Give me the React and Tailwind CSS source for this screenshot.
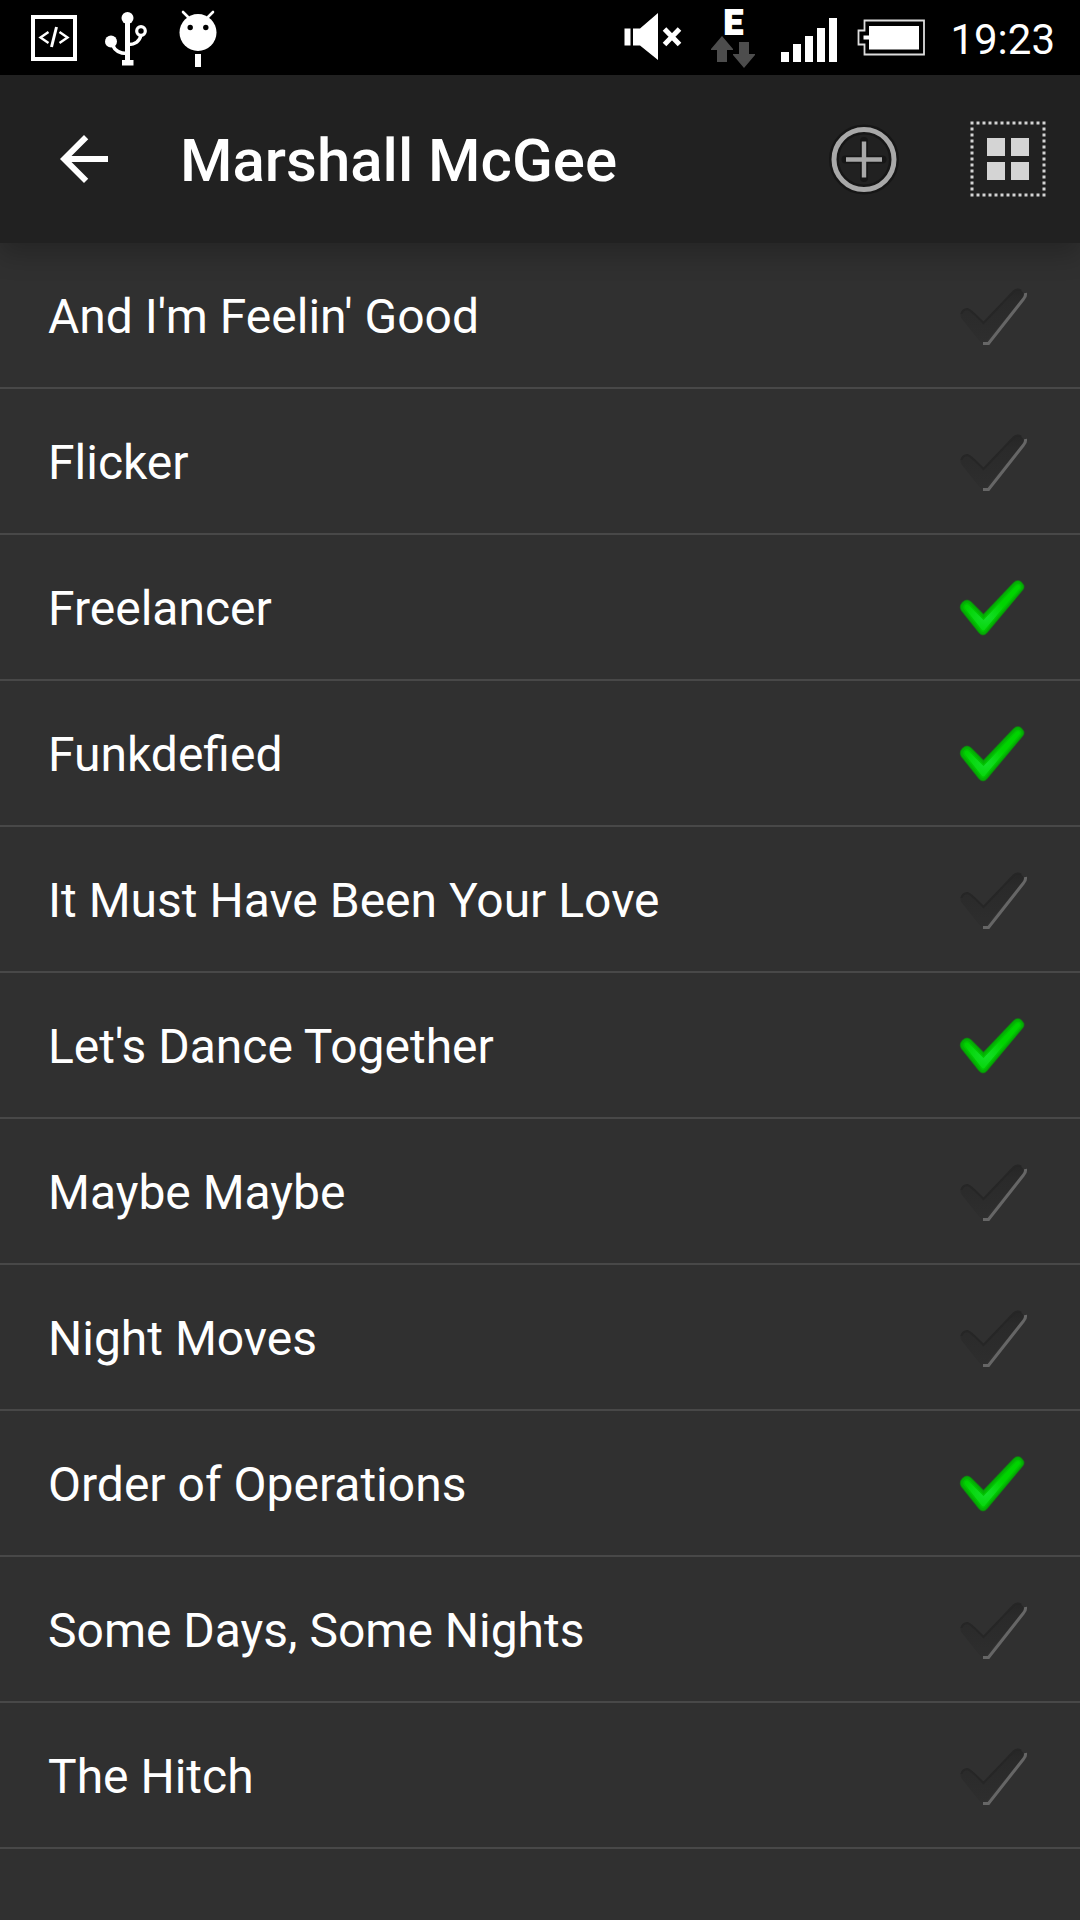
const songs = [
  { title: "And I'm Feelin' Good", checked: false },
  { title: 'Flicker', checked: false },
  { title: 'Freelancer', checked: true },
  { title: 'Funkdefied', checked: true },
  { title: 'It Must Have Been Your Love', checked: false },
  { title: "Let's Dance Together", checked: true },
  { title: 'Maybe Maybe', checked: false },
  { title: 'Night Moves', checked: false },
  { title: 'Order of Operations', checked: true },
  { title: 'Some Days, Some Nights', checked: false },
  { title: 'The Hitch', checked: false },
];

const CHECK_PATH =
  'M20.500 43.500 Q25 39.500 29 43 L41.500 55.500 L71.500 24 Q76 20 79.500 23.500 Q83.500 27.500 80.500 31 L45 73.500 Q41 78 37 73.500 L19.500 51.500 Q17 47 20.500 43.500 Z';

function CodeIcon() {
  return (
    <svg aria-hidden="true" className="h-[75px] w-[46px]" fill="none" stroke="#fff" viewBox="31 0 46 75">
      <rect height="42" strokeWidth="4" width="42" x="33" y="17" />
      <path d="M48.500 32 L40.500 37.500 L48.500 43 M59.500 32 L67.500 37.500 L59.500 43" strokeWidth="2.4" />
      <path d="M56.500 27 L51.500 47" strokeWidth="3" />
    </svg>
  );
}

function UsbIcon() {
  return (
    <svg aria-hidden="true" className="h-[75px] w-[42px]" fill="none" viewBox="105 0 42 75">
      <circle cx="127.500" cy="18" fill="#fff" r="6" />
      <circle cx="111" cy="41.500" fill="#fff" r="6" />
      <circle cx="141" cy="31" r="4.300" stroke="#fff" strokeWidth="3.200" />
      <path d="M127.500 18 V62" stroke="#fff" strokeWidth="5" />
      <path d="M112.500 45 Q116 53.500 127 53.500 M141 35 Q139 44.500 128 44.500" stroke="#fff" strokeWidth="3.400" />
      <path d="M122 60 H133.500 V65.500 H122 Z" fill="#fff" />
    </svg>
  );
}

function AndroidIcon() {
  return (
    <svg aria-hidden="true" className="h-[75px] w-[42px]" fill="none" viewBox="175 0 42 75">
      <circle cx="198" cy="32.500" fill="#fff" r="18.500" />
      <path d="M183 12 L190 19 M213 12 L206 19" stroke="#fff" strokeLinecap="round" strokeWidth="2.600" />
      <circle cx="190.200" cy="27.500" fill="#000" r="2.700" />
      <circle cx="205.800" cy="27.500" fill="#000" r="2.700" />
      <path d="M195 54 H201 V67 H195 Z" fill="#fff" />
    </svg>
  );
}

function MuteIcon() {
  return (
    <svg aria-hidden="true" className="h-[75px] w-[61px]" fill="none" viewBox="624 0 61 75">
      <path d="M624.500 28.500 H630.500 V45.500 H624.500 Z M633 28.500 H640 L658 13 V60 L640 45.500 H633 Z" fill="#fff" />
      <path d="M664.500 29 L679.500 44.500 M679.500 29 L664.500 44.500" stroke="#fff" strokeWidth="5" />
    </svg>
  );
}

function DataIcon() {
  return (
    <div className="flex h-[75px] w-14 flex-col items-center pt-2">
      <span className="text-[34px] leading-7 font-bold [-webkit-text-stroke:2px_white]">E</span>
      <svg aria-hidden="true" className="h-8 w-11" fill="#4d4d4d" viewBox="0 0 44 32">
        <path d="M11 0 L22 13 V14 H16 V26 H6 V14 H0 V13 Z M28 6 H38 V18 H44 V19 L33 32 L22 19 V18 H28 Z" />
      </svg>
    </div>
  );
}

function SignalIcon() {
  return (
    <svg aria-hidden="true" className="h-[75px] w-14" fill="#fff" viewBox="781 0 56 75">
      <path d="M781 52 h8 v10 h-8 Z M793 44 h8 v18 h-8 Z M805 36 h8 v26 h-8 Z M817 28 h8 v34 h-8 Z M829 18 h8 v44 h-8 Z" />
    </svg>
  );
}

function BatteryIcon() {
  return (
    <svg aria-hidden="true" className="h-[75px] w-[73px]" fill="none" viewBox="857 0 73 75">
      <path d="M864.500 20.500 H924 V54.500 H864.500 V44.500 H858.500 V30.500 H864.500 Z" stroke="#ddd" strokeWidth="1.800" />
      <path d="M869 26 H919 V49.500 H869 V39.500 H863.500 V35.500 H869 Z" fill="#fff" />
    </svg>
  );
}

function StatusBar() {
  return (
    <div className="flex h-[75px] items-center justify-between bg-black pr-[25px] pl-[31px] text-white">
      <div className="flex items-center gap-7">
        <CodeIcon />
        <UsbIcon />
        <AndroidIcon />
      </div>
      <div className="flex items-center gap-5">
        <MuteIcon />
        <DataIcon />
        <SignalIcon />
        <BatteryIcon />
        <span className="pt-1 text-[42px] leading-none">19:23</span>
      </div>
    </div>
  );
}

function BackIcon() {
  return (
    <svg aria-hidden="true" className="size-[72px]" fill="#fff" viewBox="0 0 24 24">
      <path d="M20 11H7.830l5.590-5.590L12 4l-8 8 8 8 1.410-1.410L7.830 13H20v-2z" />
    </svg>
  );
}

function AddIcon() {
  return (
    <svg aria-hidden="true" className="size-[72px]" fill="none" viewBox="0 0 72 72">
      <circle cx="36" cy="36.500" r="30" stroke="#161616" strokeWidth="10" />
      <path d="M36 18 V55 M17.500 36.500 H54.500" stroke="#161616" strokeLinecap="round" strokeWidth="8" />
      <circle cx="36" cy="36.500" r="30" stroke="#a8a8a8" strokeWidth="5" />
      <path d="M36 18.500 V54.500 M18 36.500 H54" stroke="#a8a8a8" strokeWidth="4.400" />
    </svg>
  );
}

function GridIcon() {
  return (
    <svg aria-hidden="true" className="size-20" fill="none" viewBox="0 0 80 80">
      <path
        d="M2.500 4 H78 M2.500 76 H78"
        stroke="#d4d4d4"
        strokeDasharray="3 3"
        strokeWidth="3"
      />
      <path
        d="M4 8.500 V74 M76 8.500 V74"
        stroke="#d4d4d4"
        strokeDasharray="3 3"
        strokeWidth="3"
      />
      <path d="M19 19 h18 v18 h-18 Z M43 19 h18 v18 h-18 Z M19 43 h18 v18 h-18 Z M43 43 h18 v18 h-18 Z" fill="#d4d4d4" />
    </svg>
  );
}

function AppBar() {
  return (
    <header className="relative flex h-[168px] items-center bg-[#212121] shadow-[0_12px_24px_rgba(0,0,0,0.22)]">
      <button type="button" aria-label="Back" className="flex h-full w-[168px] items-center justify-center">
        <BackIcon />
      </button>
      <h1 className="min-w-0 flex-1 truncate pt-1 pl-3 text-[60px] leading-[72px] font-medium text-white">
        Marshall McGee
      </h1>
      <button type="button" aria-label="Add" className="flex h-full w-36 items-center justify-center">
        <AddIcon />
      </button>
      <button type="button" aria-label="Grid view" className="flex h-full w-36 items-center justify-center">
        <GridIcon />
      </button>
    </header>
  );
}

// Gradients shared by every check mark in the list
function CheckGradients() {
  return (
    <svg aria-hidden="true" className="absolute size-0">
      <defs>
        <linearGradient id="engraved" x1="0" x2="0" y1="0" y2="1">
          <stop offset="0" stopColor="#262626" />
          <stop offset="0.25" stopColor="#2a2a2a" />
          <stop offset="0.7" stopColor="#2c2c2c" />
          <stop offset="1" stopColor="#2e2e2e" />
        </linearGradient>
        <radialGradient id="lit" cx="0.38" cy="0.7" r="0.4">
          <stop offset="0" stopColor="#15de2a" />
          <stop offset="1" stopColor="#00d400" />
        </radialGradient>
      </defs>
    </svg>
  );
}

function CheckMark() {
  return (
    <>
      <svg aria-hidden="true" className="size-24 peer-checked:hidden" fill="none" viewBox="0 0 96 96">
        <path d={CHECK_PATH} fill="url(#engraved)" />
        <path d="M19.500 47 Q20 43 25 42 Q28 42 41.500 56 L71.500 24.500 Q75 21 79 23.500" stroke="#262626" strokeWidth="2" />
        <path d="M41 76.500 H46.500 L81.500 32 Q84 29.500 83.500 26" stroke="#666" strokeWidth="3" />
      </svg>
      <svg aria-hidden="true" className="hidden size-24 peer-checked:block" fill="none" viewBox="0 0 96 96">
        <path d={CHECK_PATH} fill="#04b004" />
        <path d={CHECK_PATH} stroke="#04a004" strokeOpacity="0.5" strokeWidth="1.500" />
        <path
          d="M23 45.500 Q25 44 27 45.500 L41.500 60 L73.500 26.500 Q76 24.500 78 26 Q79.500 28 78 30 L43.500 71 Q41 73.500 39 71 L22.500 50 Q21 47.500 23 45.500 Z"
          fill="url(#lit)"
          stroke="#02c402"
          strokeWidth="1.500"
        />
      </svg>
    </>
  );
}

function SongRow({ title, checked }) {
  return (
    <li className="border-b-2 border-[#484848]">
      <label className="flex h-36 items-center justify-between pr-[42px] pl-12">
        <span className="pt-1 text-[48px] leading-none text-white">{title}</span>
        <input type="checkbox" defaultChecked={checked} className="peer sr-only" />
        <CheckMark />
      </label>
    </li>
  );
}

export default function App() {
  return (
    <div className="min-h-screen bg-[#303030] font-[Roboto,sans-serif]">
      <CheckGradients />
      <StatusBar />
      <AppBar />
      <ul>
        {songs.map((song) => (
          <SongRow key={song.title} title={song.title} checked={song.checked} />
        ))}
      </ul>
    </div>
  );
}
